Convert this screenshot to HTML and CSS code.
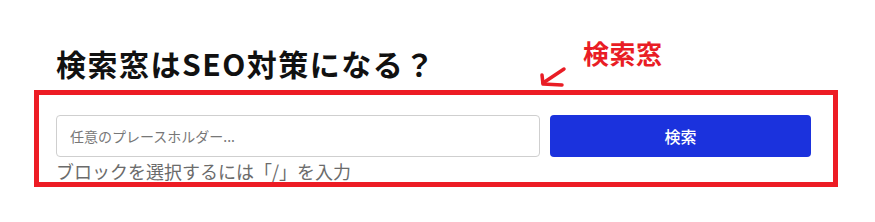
FILE: index.html
```html
<!DOCTYPE html>
<html lang="ja">
<head>
    <meta charset="UTF-8">
    <meta name="viewport" content="width=device-width, initial-scale=1.0">
    <title>検索窓はSEO対策になる？</title>
    <link rel="stylesheet" href="styles.css">
</head>
<body>
    <div class="page">
        <h2 class="title">検索窓はSEO対策になる？</h2>

        <!-- annotation -->
        <div class="note">
            <svg class="note-arrow" width="34" height="24" viewBox="0 0 34 24">
                <path d="M28 3 L7 17" />
                <path d="M6 9 L7 18 L26 19" />
            </svg>
            <span class="note-label">検索窓</span>
        </div>

        <div class="frame">
            <form class="search">
                <input type="text" class="search-input" placeholder="任意のプレースホルダー...">
                <button type="submit" class="search-btn">検索</button>
            </form>
            <p class="hint">ブロックを選択するには「/」を入力</p>
        </div>
    </div>
</body>
</html>
```

FILE: styles.css
```css
* {
    margin: 0;
    padding: 0;
    box-sizing: border-box;
    font-family: "Noto Sans CJK JP", "Noto Sans", sans-serif;
}

body {
    background: #fff;
}

.page {
    position: relative;
    width: 875px;
    height: 222px;
    padding: 43px 0 0 34px;
}

.title {
    margin-left: 22px;
    font-size: 30px;
    line-height: 40px;
    font-weight: 700;
    color: #111;
    letter-spacing: 1.5px;
}

.note {
    position: absolute;
    left: 536px;
    top: 36px;
}

.note-arrow {
    position: absolute;
    left: 0;
    top: 30px;
    fill: none;
    stroke: #e91d25;
    stroke-width: 3.5;
    stroke-linecap: round;
    stroke-linejoin: round;
}

.note-label {
    position: absolute;
    left: 47px;
    top: 0;
    white-space: nowrap;
    font-size: 26px;
    line-height: 34px;
    font-weight: 700;
    color: #e91d25;
    letter-spacing: 0.5px;
}

.frame {
    width: 804px;
    height: 97px;
    margin-top: 7px;
    border: 5px solid #ed1c24;
    padding: 20px 0 0 17px;
}

.search {
    display: flex;
    gap: 10px;
}

.search-input {
    width: 484px;
    height: 42px;
    border: 1px solid #cfcfcf;
    border-radius: 4px;
    padding: 0 13px;
    font-size: 14px;
    color: #333;
}

.search-input::placeholder {
    color: #777;
}

.search-btn {
    width: 261px;
    height: 42px;
    border: none;
    border-radius: 4px;
    background-color: #1b32dd;
    color: #fff;
    font-size: 16px;
    font-weight: 500;
    cursor: pointer;
}

.hint {
    margin-top: 4px;
    font-size: 18px;
    line-height: 20px;
    color: #6b6b6b;
}
```
